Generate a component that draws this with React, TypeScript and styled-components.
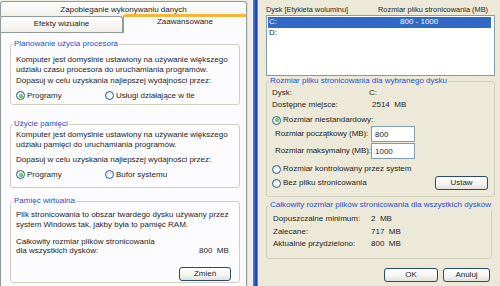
import React from 'react'
import styled, { createGlobalStyle } from 'styled-components'

const GlobalStyle = createGlobalStyle`
  html, body { margin: 0; padding: 0; }
  body {
    width: 500px;
    height: 286px;
    overflow: hidden;
    font-family: "Liberation Sans", Arial, sans-serif;
    font-size: 8px;
    line-height: 9.5px;
    color: #1e1e1e;
    background: #ece9d8;
  }
`

const Screen = styled.div`
  display: flex;
  width: 500px;
  height: 286px;
  overflow: hidden;
`

/* ---------- left dialog (tabs) ---------- */

const LeftDialog = styled.div`
  flex: none;
  width: 247px;
  display: flex;
  flex-direction: column;
  background: #eeede6;
`

const TabRow = styled.div<{ $h: number }>`
  display: flex;
  align-items: flex-end;
  height: ${p => p.$h}px;
`

const Tab = styled.div<{ $w?: number; $active?: boolean; $pt: number }>`
  box-sizing: border-box;
  position: relative;
  width: ${p => (p.$w ? `${p.$w}px` : '100%')};
  height: ${p => (p.$active ? 19 : 16)}px;
  margin-bottom: ${p => (p.$active ? -1 : 0)}px;
  z-index: ${p => (p.$active ? 1 : 0)};
  padding-top: ${p => p.$pt}px;
  text-align: center;
  line-height: 9px;
  border: 1px solid #919b9c;
  border-bottom: none;
  border-top: ${p => (p.$active ? '3px solid #f5b73a' : '1px solid #919b9c')};
  border-radius: 3px 3px 0 0;
  background: ${p => (p.$active ? '#fcfcfe' : 'linear-gradient(#ffffff, #f0efe9)')};
`

const Page = styled.div`
  flex: 1;
  display: flex;
  flex-direction: column;
  padding: 6px 6px 0 9px;
  background: #fcfcfe;
  border: 1px solid #919b9c;
  border-bottom: none;
`

/* ---------- group boxes ---------- */

const Group = styled.fieldset<{ $h: number; $mt?: number; $mr?: number }>`
  box-sizing: border-box;
  height: ${p => p.$h}px;
  margin: ${p => p.$mt ?? 0}px ${p => p.$mr ?? 0}px 0 0;
  padding: 0;
  min-width: 0;
  border: 1px solid #d0d0bf;
  border-radius: 3px;
`

const Legend = styled.legend`
  margin-left: 2px;
  padding: 0 1px;
  line-height: 10px;
  color: #1c4fd0;
  white-space: nowrap;
`

const GroupBody = styled.div<{ $pt: number; $pl?: number; $pr?: number }>`
  display: flex;
  flex-direction: column;
  padding: ${p => p.$pt}px ${p => p.$pr ?? 5}px 0 ${p => p.$pl ?? 5}px;
`

const Text = styled.div<{ $mt?: number }>`
  margin-top: ${p => p.$mt ?? 0}px;
  white-space: nowrap;
`

const RadioRow = styled.div<{ $mt?: number }>`
  display: flex;
  align-items: center;
  height: 10px;
  margin-top: ${p => p.$mt ?? 0}px;
`

const Radio = styled.label<{ $w?: number }>`
  display: inline-flex;
  align-items: center;
  gap: 2px;
  width: ${p => (p.$w ? `${p.$w}px` : 'auto')};
  white-space: nowrap;
`

const RadioDot = styled.span<{ $on?: boolean }>`
  position: relative;
  box-sizing: border-box;
  width: 9px;
  height: 9px;
  flex: none;
  border-radius: 50%;
  border: 1px solid #2a5f8f;
  background: radial-gradient(circle at 65% 65%, #ffffff, #dcdcd3);

  &::after {
    content: '';
    display: ${p => (p.$on ? 'block' : 'none')};
    position: absolute;
    inset: 1.5px;
    border-radius: 50%;
    background: radial-gradient(circle at 40% 40%, #7fe07f, #21a121);
  }
`

const Button = styled.button<{ $w: number }>`
  box-sizing: border-box;
  width: ${p => p.$w}px;
  height: 14px;
  padding: 0;
  border: 1px solid #2b4a73;
  border-radius: 3px;
  background: linear-gradient(#ffffff 0%, #f5f5f1 55%, #e2e1d9 100%);
  font: inherit;
  color: inherit;
  line-height: 12px;
`

const ValueRow = styled.div<{ $mt?: number; $lw: number; $h?: number }>`
  display: grid;
  grid-template-columns: ${p => p.$lw}px 1fr;
  align-items: center;
  height: ${p => p.$h ?? 10}px;
  margin-top: ${p => p.$mt ?? 0}px;
  white-space: nowrap;
`

const FieldLabel = styled.span`
  padding-left: 3px;
  letter-spacing: -0.1px;
`

const RightAlign = styled.div<{ $mt: number }>`
  display: flex;
  justify-content: flex-end;
  margin-top: ${p => p.$mt}px;
`

/* ---------- window frame between the dialogs ---------- */

const Gap = styled.div`
  flex: none;
  width: 6px;
  box-sizing: border-box;
  background: #eeede6;
  border-left: 1px solid #e0dfd8;
`

const Frame = styled.div`
  flex: none;
  width: 5px;
  background: linear-gradient(to right, #5b87e2 0%, #2953c9 40%, #1b3fae 70%, #8ea8e6 100%);
`

/* ---------- right dialog ---------- */

const RightDialog = styled.div`
  flex: 1;
  min-width: 0;
  display: flex;
  flex-direction: column;
  padding: 5px 5px 0 8px;
  background: #ece9d8;
`

const ListHeader = styled.div`
  display: grid;
  grid-template-columns: 112px 1fr;
  height: 10px;
  line-height: 10px;
  font-size: 7.4px;
  white-space: nowrap;
`

const ListBox = styled.div`
  box-sizing: border-box;
  height: 61px;
  padding: 1px;
  background: #ffffff;
  border: 1px solid #7f9db9;
`

const ListItem = styled.div<{ $sel?: boolean }>`
  display: grid;
  grid-template-columns: 131px 1fr;
  height: 10.5px;
  line-height: 10px;
  padding-left: 1px;
  margin-right: 2px;
  background: ${p => (p.$sel ? '#3169c6' : 'transparent')};
  color: ${p => (p.$sel ? '#ffffff' : 'inherit')};
`

const Field = styled.input`
  box-sizing: border-box;
  width: 44px;
  height: 16px;
  padding: 0 3px;
  border: 1px solid #7f9db9;
  background: #ffffff;
  font: inherit;
  color: inherit;
`

const BottomBar = styled.div`
  display: flex;
  justify-content: flex-end;
  gap: 5px;
  margin-top: 9px;
  padding-right: 5px;
`

export default function App() {
  return (
    <Screen>
      <GlobalStyle />
      <LeftDialog>
        <TabRow $h={17}>
          <Tab $pt={3}>Zapobieganie wykonywaniu danych</Tab>
        </TabRow>
        <TabRow $h={15}>
          <Tab $w={123} $pt={2}>Efekty wizualne</Tab>
          <Tab $w={124} $active $pt={0}>Zaawansowane</Tab>
        </TabRow>
        <Page>
          <Group $h={66}>
            <Legend>Planowanie użycia procesora</Legend>
            <GroupBody $pt={6}>
              <Text>Komputer jest domyślnie ustawiony na używanie większego</Text>
              <Text>udziału czasu procesora do uruchamiania programów.</Text>
              <Text $mt={2}>Dopasuj w celu uzyskania najlepszej wydajności przez:</Text>
              <RadioRow $mt={5}>
                <Radio $w={89}><RadioDot $on />Programy</Radio>
                <Radio><RadioDot />Usługi działające w tle</Radio>
              </RadioRow>
            </GroupBody>
          </Group>

          <Group $h={69} $mt={14}>
            <Legend>Użycie pamięci</Legend>
            <GroupBody $pt={1}>
              <Text>Komputer jest domyślnie ustawiony na używanie większego</Text>
              <Text>udziału pamięci do uruchamiania programów.</Text>
              <Text $mt={6}>Dopasuj w celu uzyskania najlepszej wydajności przez:</Text>
              <RadioRow $mt={5}>
                <Radio $w={89}><RadioDot $on />Programy</Radio>
                <Radio><RadioDot />Bufor systemu</Radio>
              </RadioRow>
            </GroupBody>
          </Group>

          <Group $h={87} $mt={8}>
            <Legend>Pamięć wirtualna</Legend>
            <GroupBody $pt={4} $pr={8}>
              <Text>Plik stronicowania to obszar twardego dysku używany przez</Text>
              <Text>system Windows tak, jakby była to pamięć RAM.</Text>
              <Text $mt={7.5}>Całkowity rozmiar plików stronicowania</Text>
              <ValueRow $lw={183} $h={9.5}>
                <span>dla wszystkich dysków:</span>
                <span>800&nbsp;&nbsp;MB</span>
              </ValueRow>
              <RightAlign $mt={11.5}>
                <Button $w={52}>Zmień</Button>
              </RightAlign>
            </GroupBody>
          </Group>
        </Page>
      </LeftDialog>

      <Gap />
      <Frame />

      <RightDialog>
        <ListHeader>
          <span>Dysk [Etykieta woluminu]</span>
          <span>Rozmiar pliku stronicowania (MB)</span>
        </ListHeader>
        <ListBox>
          <ListItem $sel>
            <span>C:</span>
            <span>800 - 1000</span>
          </ListItem>
          <ListItem>
            <span>D:</span>
            <span />
          </ListItem>
        </ListBox>

        <Group $h={121}>
          <Legend>Rozmiar pliku stronicowania dla wybranego dysku</Legend>
          <GroupBody $pt={2} $pl={5} $pr={5}>
            <ValueRow $lw={97}>
              <span>Dysk:</span>
              <span>C:</span>
            </ValueRow>
            <ValueRow $lw={100} $mt={2}>
              <span>Dostępne miejsce:</span>
              <span>2514&nbsp;&nbsp;MB</span>
            </ValueRow>
            <RadioRow $mt={5}>
              <Radio><RadioDot $on />Rozmiar niestandardowy:</Radio>
            </RadioRow>
            <ValueRow $lw={99} $h={16} $mt={1}>
              <FieldLabel>Rozmiar początkowy (MB):</FieldLabel>
              <Field defaultValue="800" />
            </ValueRow>
            <ValueRow $lw={99} $h={16} $mt={1}>
              <FieldLabel>Rozmiar maksymalny (MB):</FieldLabel>
              <Field defaultValue="1000" />
            </ValueRow>
            <RadioRow $mt={5}>
              <Radio><RadioDot />Rozmiar kontrolowany przez system</Radio>
            </RadioRow>
            <ValueRow $lw={163} $h={14} $mt={2}>
              <Radio><RadioDot />Bez pliku stronicowania</Radio>
              <Button $w={53}>Ustaw</Button>
            </ValueRow>
          </GroupBody>
        </Group>

        <Group $h={59} $mt={3} $mr={3}>
          <Legend>Całkowity rozmiar plików stronicowania dla wszystkich dysków</Legend>
          <GroupBody $pt={4} $pl={6}>
            <ValueRow $lw={98}>
              <span>Dopuszczalne minimum:</span>
              <span>2&nbsp;&nbsp;MB</span>
            </ValueRow>
            <ValueRow $lw={98} $mt={2.5}>
              <span>Zalecane:</span>
              <span>717&nbsp;&nbsp;MB</span>
            </ValueRow>
            <ValueRow $lw={98} $mt={2}>
              <span>Aktualnie przydzielono:</span>
              <span>800&nbsp;&nbsp;MB</span>
            </ValueRow>
          </GroupBody>
        </Group>

        <BottomBar>
          <Button $w={54}>OK</Button>
          <Button $w={47}>Anuluj</Button>
        </BottomBar>
      </RightDialog>
    </Screen>
  )
}
